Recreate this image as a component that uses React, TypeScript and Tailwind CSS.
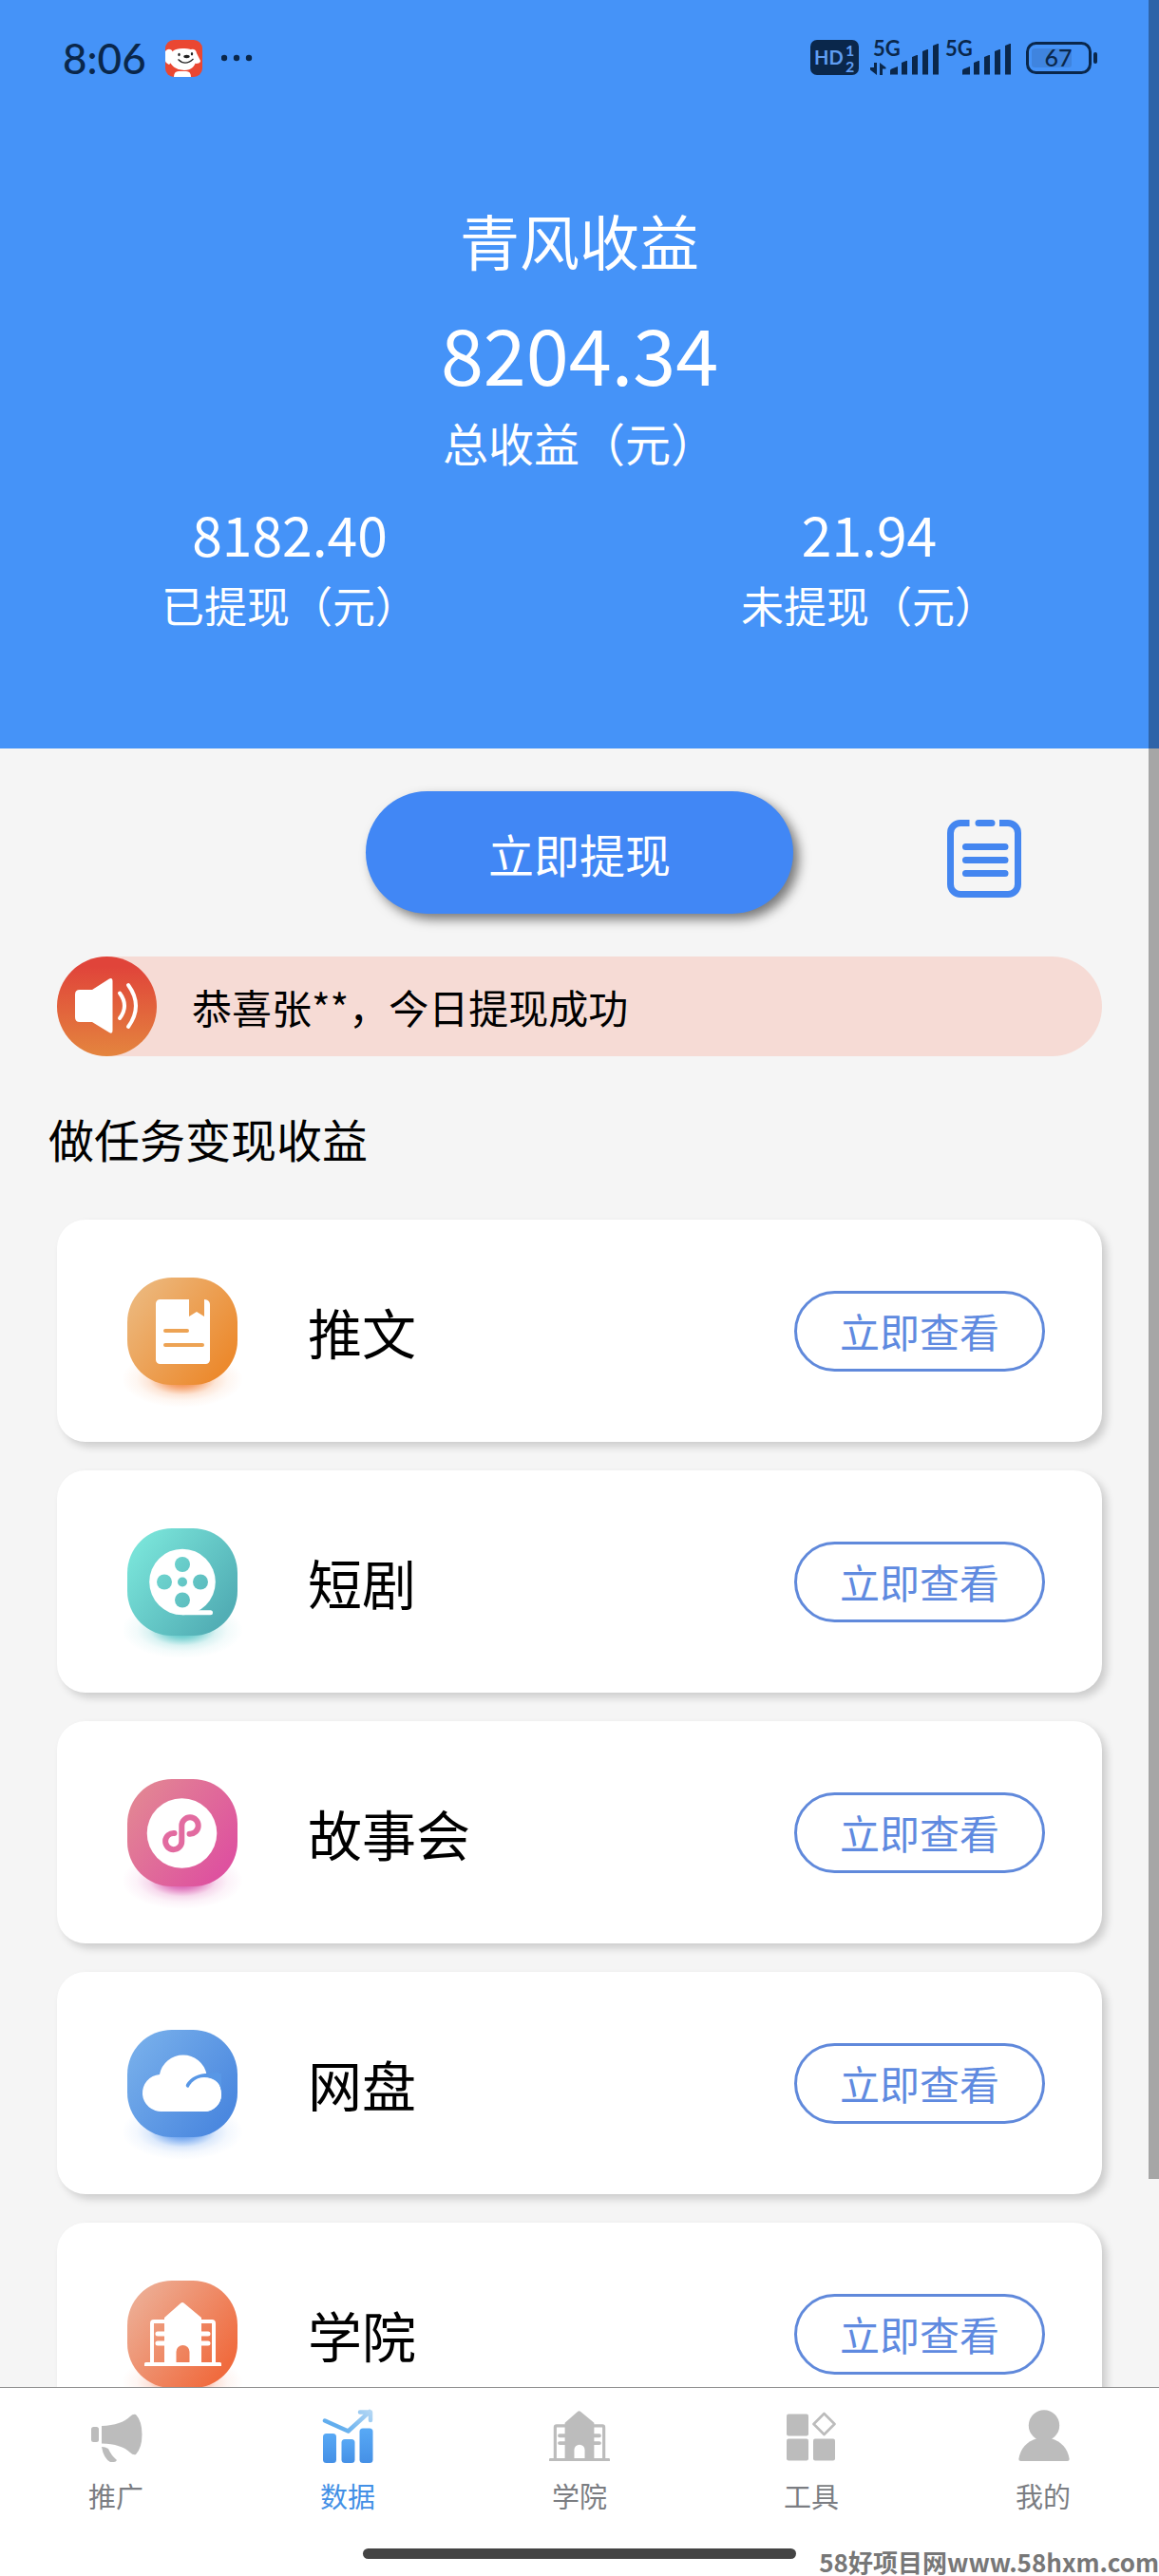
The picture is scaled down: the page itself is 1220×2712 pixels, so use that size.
import React from "react";

type TaskKind = "book" | "film" | "mini" | "cloud" | "academy";

interface Task {
  kind: TaskKind;
  label: string;
  from: string;
  to: string;
  glow: string;
}

const tasks: Task[] = [
  { kind: "book", label: "推文", from: "#ecb578", to: "#ec8a2e", glow: "#f2701d" },
  { kind: "film", label: "短剧", from: "#78e2d8", to: "#52aeb5", glow: "#2fb9b9" },
  { kind: "mini", label: "故事会", from: "#e28394", to: "#de529f", glow: "#d0309a" },
  { kind: "cloud", label: "网盘", from: "#74acea", to: "#4b88df", glow: "#3f86ea" },
  { kind: "academy", label: "学院", from: "#edaa90", to: "#f06b3e", glow: "#f2673a" },
];

const academyPath =
  "M18 87.500a1.500 1.500 0 0 1 1.500-1.500H24V45a4 4 0 0 1 4-4h11v-2L56 24a3 3 0 0 1 4 0l18 15v2h11a4 4 0 0 1 4 4v41h4.500a1.500 1.500 0 0 1 1.500 1.500V90H18zM28 86h11V68.500h-7a2.500 2.500 0 0 1 0-5h7V58.500h-7a2.500 2.500 0 0 1 0-5h7V45H28zM78 86h11V45H78v8.500h7a2.500 2.500 0 0 1 0 5h-7v5h7a2.500 2.500 0 0 1 0 5h-7zM51.500 86h14V75a7 7 0 0 0-14 0z";

function TaskGlyph({ kind, fill }: { kind: TaskKind; fill: string }) {
  switch (kind) {
    case "book":
      return (
        <>
          <path
            d="M34 23H65V41L73 36L81 41V23C85 23.500 87 25 87 29V86.500A4.500 4.500 0 0 1 82.500 91H34.500A4.500 4.500 0 0 1 30 86.500V27.500A4.500 4.500 0 0 1 34.500 23Z"
            fill="#fff"
          />
          <path d="M40 56H63M40 71H79" stroke="#eda354" strokeWidth="4" strokeLinecap="round" />
        </>
      );
    case "film":
      return (
        <>
          <circle cx="58" cy="56.500" r="34.800" fill="#fff" />
          <path d="M58 91.300H87.500a2.500 2.500 0 0 0 0-5H72L58 84Z" fill="#fff" />
          <g fill={fill}>
            <circle cx="58" cy="38" r="8" />
            <circle cx="39" cy="56.500" r="8" />
            <circle cx="77" cy="56.500" r="8" />
            <circle cx="58" cy="75.500" r="8" />
            <circle cx="58" cy="56.500" r="5" />
          </g>
        </>
      );
    case "mini":
      return (
        <>
          <circle cx="57.500" cy="57" r="36.800" fill="#fff" />
          <path
            d="M65.500 57.700A8.700 8.700 0 1 0 57.300 49V65.500A8.600 8.600 0 1 1 49.500 57"
            fill="none"
            stroke="#e26ba0"
            strokeWidth="6"
            strokeLinecap="round"
          />
        </>
      );
    case "cloud":
      return (
        <>
          <path
            d="M37 86A19.500 19.500 0 0 1 34 47A25.200 25.200 0 0 1 83.500 47Q99 52 99 68A18 18 0 0 1 81 86Z"
            fill="#fff"
          />
          <path d="M64 58.500Q70.500 48 86 48L95 47" fill="none" stroke="#5897e6" strokeWidth="4.500" strokeLinecap="round" />
          <path d="M82 50.500Q99 51 99 68V46H84Z" fill="#5897e6" />
          <circle cx="81" cy="68" r="18" fill="#fff" />
        </>
      );
    case "academy":
      return <path d={academyPath} fill="#fff" fillRule="evenodd" />;
  }
}

function TaskIcon({ task }: { task: Task }) {
  const base = "task-" + task.kind;
  return (
    <svg width="116" height="113" viewBox="0 0 116 113" className="shrink-0 overflow-visible" aria-hidden="true">
      <defs>
        <linearGradient id={base} gradientUnits="userSpaceOnUse" x1="12" y1="20" x2="104" y2="90">
          <stop offset="0" stopColor={task.from} />
          <stop offset="1" stopColor={task.to} />
        </linearGradient>
        <radialGradient id={base + "-glow"}>
          <stop offset="0" stopColor={task.glow} stopOpacity="1" />
          <stop offset="0.300" stopColor={task.glow} stopOpacity="0.600" />
          <stop offset="0.550" stopColor={task.glow} stopOpacity="0.180" />
          <stop offset="0.750" stopColor={task.glow} stopOpacity="0.060" />
          <stop offset="1" stopColor={task.glow} stopOpacity="0" />
        </radialGradient>
      </defs>
      <ellipse cx="58" cy="107" rx="64" ry="30" fill={`url(#${base}-glow)`} />
      <rect width="116" height="113" rx="47" fill={`url(#${base})`} />
      <TaskGlyph kind={task.kind} fill={`url(#${base})`} />
    </svg>
  );
}

function SignalBars({ x }: { x: number }) {
  return (
    <g transform={`translate(${x} 0)`}>
      <path d="M0 36v-3.500q0-1.500 1.500-2L8 28v8.500H1Q0 37 0 36Z" />
      <path d="M12 36.500V24l5-2h1v14.500Z" />
      <path d="M23 36.500V18l5-2h1v20.500Z" />
      <path d="M34 36.500V12l5-2h1v26.500Z" />
      <path d="M45 36.500V6l5-2h1v32.500Z" />
    </g>
  );
}

function StatusBar() {
  return (
    <div className="flex h-[122px] items-center justify-between pr-[65px] pl-[66px] text-[#0a274b]">
      <div className="flex items-center">
        <span className="font-[Lato] text-[44px] leading-[60px] font-medium">8:06</span>
        <svg width="39" height="39" viewBox="0 0 39 39" className="ml-5" aria-hidden="true">
          <clipPath id="dog-clip">
            <rect width="39" height="39" rx="9" />
          </clipPath>
          <g clipPath="url(#dog-clip)">
            <rect width="39" height="39" fill="#ea4732" />
            <path d="M0 12Q3 8 7 11L10 20L4 26Q0 24 0 22Z" fill="#fff" />
            <path d="M27 10Q32 9 33 14L37 22Q37 25 32 25L27 20Z" fill="#fff" />
            <path d="M4 20Q5 9 18 9Q33 8 33 20Q31 32 20 32Q6 31 4 20Z" fill="#fff" />
            <path d="M9 39Q9 33 14 33H22Q27 33 27 39Z" fill="#fff" />
            <g fill="#222">
              <ellipse cx="14.500" cy="15.500" rx="1.200" ry="1.800" />
              <ellipse cx="28" cy="14.800" rx="1.200" ry="1.800" />
              <ellipse cx="22.500" cy="17.500" rx="3.200" ry="1.700" />
            </g>
            <path d="M13.500 20.500Q21 28 29.500 20" fill="none" stroke="#222" strokeWidth="1.200" />
          </g>
        </svg>
        <svg width="34" height="8" viewBox="0 0 34 8" className="ml-5 fill-current" aria-hidden="true">
          <circle cx="3" cy="4" r="3.200" />
          <circle cx="16" cy="4" r="3.200" />
          <circle cx="29" cy="4" r="3.200" />
        </svg>
      </div>
      <div className="flex items-center">
        <svg width="51" height="38" viewBox="0 0 51 38" className="font-[Lato] font-bold" aria-hidden="true">
          <rect width="51" height="37" rx="7" fill="currentColor" />
          <g fill="#5f9df2">
            <text x="4" y="26" fontSize="20">HD</text>
            <text x="37" y="17" fontSize="16">1</text>
            <text x="37" y="34" fontSize="16">2</text>
          </g>
        </svg>
        <svg width="152" height="50" viewBox="0 -6 152 50" className="ml-3 fill-current font-[Lato] font-bold" aria-hidden="true">
          <text x="3" y="17" fontSize="22">5G</text>
          <text x="79" y="17" fontSize="22">5G</text>
          <path d="M4 24h3v13L0 31.500V29h4ZM10 37h3V30.500h3.500V29L10 24Z" />
          <SignalBars x={21} />
          <SignalBars x={97} />
        </svg>
        <svg width="75" height="34" viewBox="0 0 75 34" className="ml-3 font-[Lato] font-medium" aria-hidden="true">
          <rect x="6" y="7" width="42" height="20" rx="3" fill="#3f84df" />
          <rect x="1.500" y="1.500" width="66" height="31" rx="9" fill="none" stroke="currentColor" strokeWidth="3" />
          <rect x="71" y="11" width="4" height="12" rx="2" fill="currentColor" />
          <text x="34" y="26" fontSize="25" textAnchor="middle" fill="currentColor">67</text>
        </svg>
      </div>
    </div>
  );
}

function Amount({ value, label }: { value: string; label: string }) {
  return (
    <div className="text-center">
      <p className="text-[57px] leading-[72px]">{value}</p>
      <p className="mt-[10px] text-[45px] leading-[60px]">{label}</p>
    </div>
  );
}

function RecordsIcon() {
  return (
    <svg width="78" height="82" viewBox="0 0 78 82" fill="none" stroke="#4486f0" strokeWidth="7" aria-hidden="true">
      <path d="M23.500 3.500H14A10.500 10.500 0 0 0 3.500 14V68A10.500 10.500 0 0 0 14 78.500H64A10.500 10.500 0 0 0 74.500 68V14A10.500 10.500 0 0 0 64 3.500H55" />
      <path d="M33 3.500H47M19.500 28.500H61M19.500 42.500H61M19.500 56.500H61" strokeLinecap="round" />
    </svg>
  );
}

function SpeakerIcon() {
  return (
    <svg width="105" height="105" viewBox="0 0 105 105" className="shrink-0" aria-hidden="true">
      <defs>
        <linearGradient id="speaker" x1="0" y1="0" x2="0" y2="1">
          <stop offset="0.100" stopColor="#e0443a" />
          <stop offset="1" stopColor="#e4853e" />
        </linearGradient>
      </defs>
      <circle cx="52.500" cy="52.500" r="52.500" fill="url(#speaker)" />
      <path d="M24 35H37L55 23.500Q58.500 22 58.500 26V78Q58.500 82 55 80L37 69H24Q19 69 19 64V40Q19 35 24 35Z" fill="#fff" />
      <path d="M66 38.500Q76 52 66 65M75 30Q91 52 75 74" fill="none" stroke="#fff" strokeWidth="4" strokeLinecap="round" />
    </svg>
  );
}

const tabs: { label: string; active?: boolean; icon: React.ReactNode }[] = [
  {
    label: "推广",
    icon: (
      <svg width="64" height="60" viewBox="0 0 64 60" fill="#bcbcbc" aria-hidden="true">
        <rect x="6" y="20" width="8" height="16" rx="2.500" />
        <path d="M17 19Q38 18 47 9Q50 6 53 7Q59.500 14 59.500 28Q59.500 42 53 49Q50 50 47 47Q38 38 17 37.500Z" />
        <path d="M17 41Q21 41 24 43Q27 50 33 55Q32 57 30 57H26Q19 53 17 41Z" />
      </svg>
    ),
  },
  {
    label: "数据",
    active: true,
    icon: (
      <svg width="64" height="60" viewBox="0 0 64 60" aria-hidden="true">
        <defs>
          <linearGradient id="bars" x1="0" y1="0" x2="0" y2="1">
            <stop offset="0" stopColor="#58a9f5" />
            <stop offset="1" stopColor="#4590e6" />
          </linearGradient>
          <linearGradient id="trend" gradientUnits="userSpaceOnUse" x1="30" y1="28" x2="56" y2="2">
            <stop offset="0" stopColor="#62aeee" />
            <stop offset="1" stopColor="#b4d7f4" />
          </linearGradient>
        </defs>
        <g fill="url(#bars)">
          <rect x="6" y="27" width="14" height="31" rx="3.500" />
          <rect x="25.500" y="33" width="14" height="25" rx="3.500" />
          <rect x="44.500" y="21.500" width="14" height="36.500" rx="3.500" />
        </g>
        <path d="M8 13.500L32.500 24.500L55 4M45 4.500H56V13" fill="none" stroke="url(#trend)" strokeWidth="4.500" strokeLinecap="round" strokeLinejoin="round" />
      </svg>
    ),
  },
  {
    label: "学院",
    icon: (
      <svg width="64" height="60" viewBox="18 19 81 76" fill="#bcbcbc" fillRule="evenodd" aria-hidden="true">
        <path d={academyPath} />
      </svg>
    ),
  },
  {
    label: "工具",
    icon: (
      <svg width="64" height="60" viewBox="0 0 64 60" fill="#bcbcbc" aria-hidden="true">
        <rect x="6" y="6.500" width="23" height="23" rx="2" />
        <rect x="6" y="32.500" width="23" height="23" rx="2" />
        <rect x="34" y="32.500" width="23" height="23" rx="2" />
        <path d="M45.500 6L56.500 17L45.500 28L34.500 17Z" fill="none" stroke="#bcbcbc" strokeWidth="2.600" strokeLinejoin="round" />
      </svg>
    ),
  },
  {
    label: "我的",
    icon: (
      <svg width="64" height="60" viewBox="0 0 64 60" fill="#bcbcbc" aria-hidden="true">
        <circle cx="33" cy="18.500" r="16.200" />
        <path d="M26 32H40Q57 37 59.700 54Q59.700 56 57.500 56H8.500Q6.300 56 6.300 54Q9 37 26 32Z" />
      </svg>
    ),
  },
];

export default function App() {
  return (
    <div className="relative flex h-screen flex-col overflow-hidden bg-[#f5f5f5] font-['Noto_Sans_CJK_SC',sans-serif] text-black">
      <main className="min-h-0 flex-1 overflow-y-auto [scrollbar-width:none]">
        <header className="bg-[#4593f8] pb-[121px] text-white">
          <StatusBar />
          <h1 className="mt-[85px] text-center text-[63px] leading-[90px]">青风收益</h1>
          <p className="mt-6 text-center text-[81px] leading-[100px]">8204.34</p>
          <p className="mt-3 text-center text-[48px] leading-[64px]">总收益（元）</p>
          <div className="mt-7 grid grid-cols-2">
            <Amount value="8182.40" label="已提现（元）" />
            <Amount value="21.94" label="未提现（元）" />
          </div>
        </header>

        <div className="mt-[45px] grid grid-cols-[1fr_450px_1fr] items-center">
          <button
            type="button"
            className="col-start-2 h-[129px] rounded-full bg-[#4187f5] text-[48px] leading-[64px] text-white shadow-[6px_6px_12px_rgba(0,0,0,0.5)]"
          >
            立即提现
          </button>
          <button type="button" aria-label="提现记录" className="mt-3 ml-[162px] w-[78px]">
            <RecordsIcon />
          </button>
        </div>

        <div className="mx-[60px] mt-[45px] flex items-center gap-[37px] rounded-full bg-[#f6dbd5]">
          <SpeakerIcon />
          <p className="text-[42px] leading-[60px]">恭喜张**，今日提现成功</p>
        </div>

        <h2 className="mt-[50px] ml-[51px] text-[48px] leading-[72px]">做任务变现收益</h2>

        <ul className="mx-[60px] mt-[50px] flex flex-col gap-[30px]">
          {tasks.map((task) => (
            <li
              key={task.kind}
              className="flex h-[234px] items-center rounded-[30px] bg-white pr-[60px] pl-[74px] shadow-[5px_5px_9px_rgba(0,0,0,0.17)]"
            >
              <TaskIcon task={task} />
              <span className="ml-[74px] flex-1 text-[57px] leading-[80px]">{task.label}</span>
              <button
                type="button"
                className="h-[85px] w-[264px] rounded-full border-3 border-[#6089db] text-[42px] leading-[60px] text-[#5f8ae0]"
              >
                立即查看
              </button>
            </li>
          ))}
        </ul>
      </main>

      <nav className="border-t border-[#8c8c8c] bg-white pb-[18px]">
        <div className="grid grid-cols-5 pt-[21px]">
          {tabs.map((tab) => (
            <a key={tab.label} href="#" aria-current={tab.active ? "page" : undefined} className="flex flex-col items-center gap-[14px]">
              {tab.icon}
              <span className={tab.active ? "text-[29px] leading-[36px] text-[#4390e6]" : "text-[29px] leading-[36px] text-[#7b7d82]"}>
                {tab.label}
              </span>
            </a>
          ))}
        </div>
        <div className="mx-auto mt-[38px] h-[11px] w-[456px] rounded-full bg-[#444444]" />
      </nav>

      <div className="absolute top-0 right-0 h-[2294px] w-[11px] bg-black/32" aria-hidden="true" />
      <p className="absolute right-0 bottom-0 text-[26px] leading-[30px] font-bold whitespace-nowrap text-[#777777]">
        58好项目网www.58hxm.com
      </p>
    </div>
  );
}
